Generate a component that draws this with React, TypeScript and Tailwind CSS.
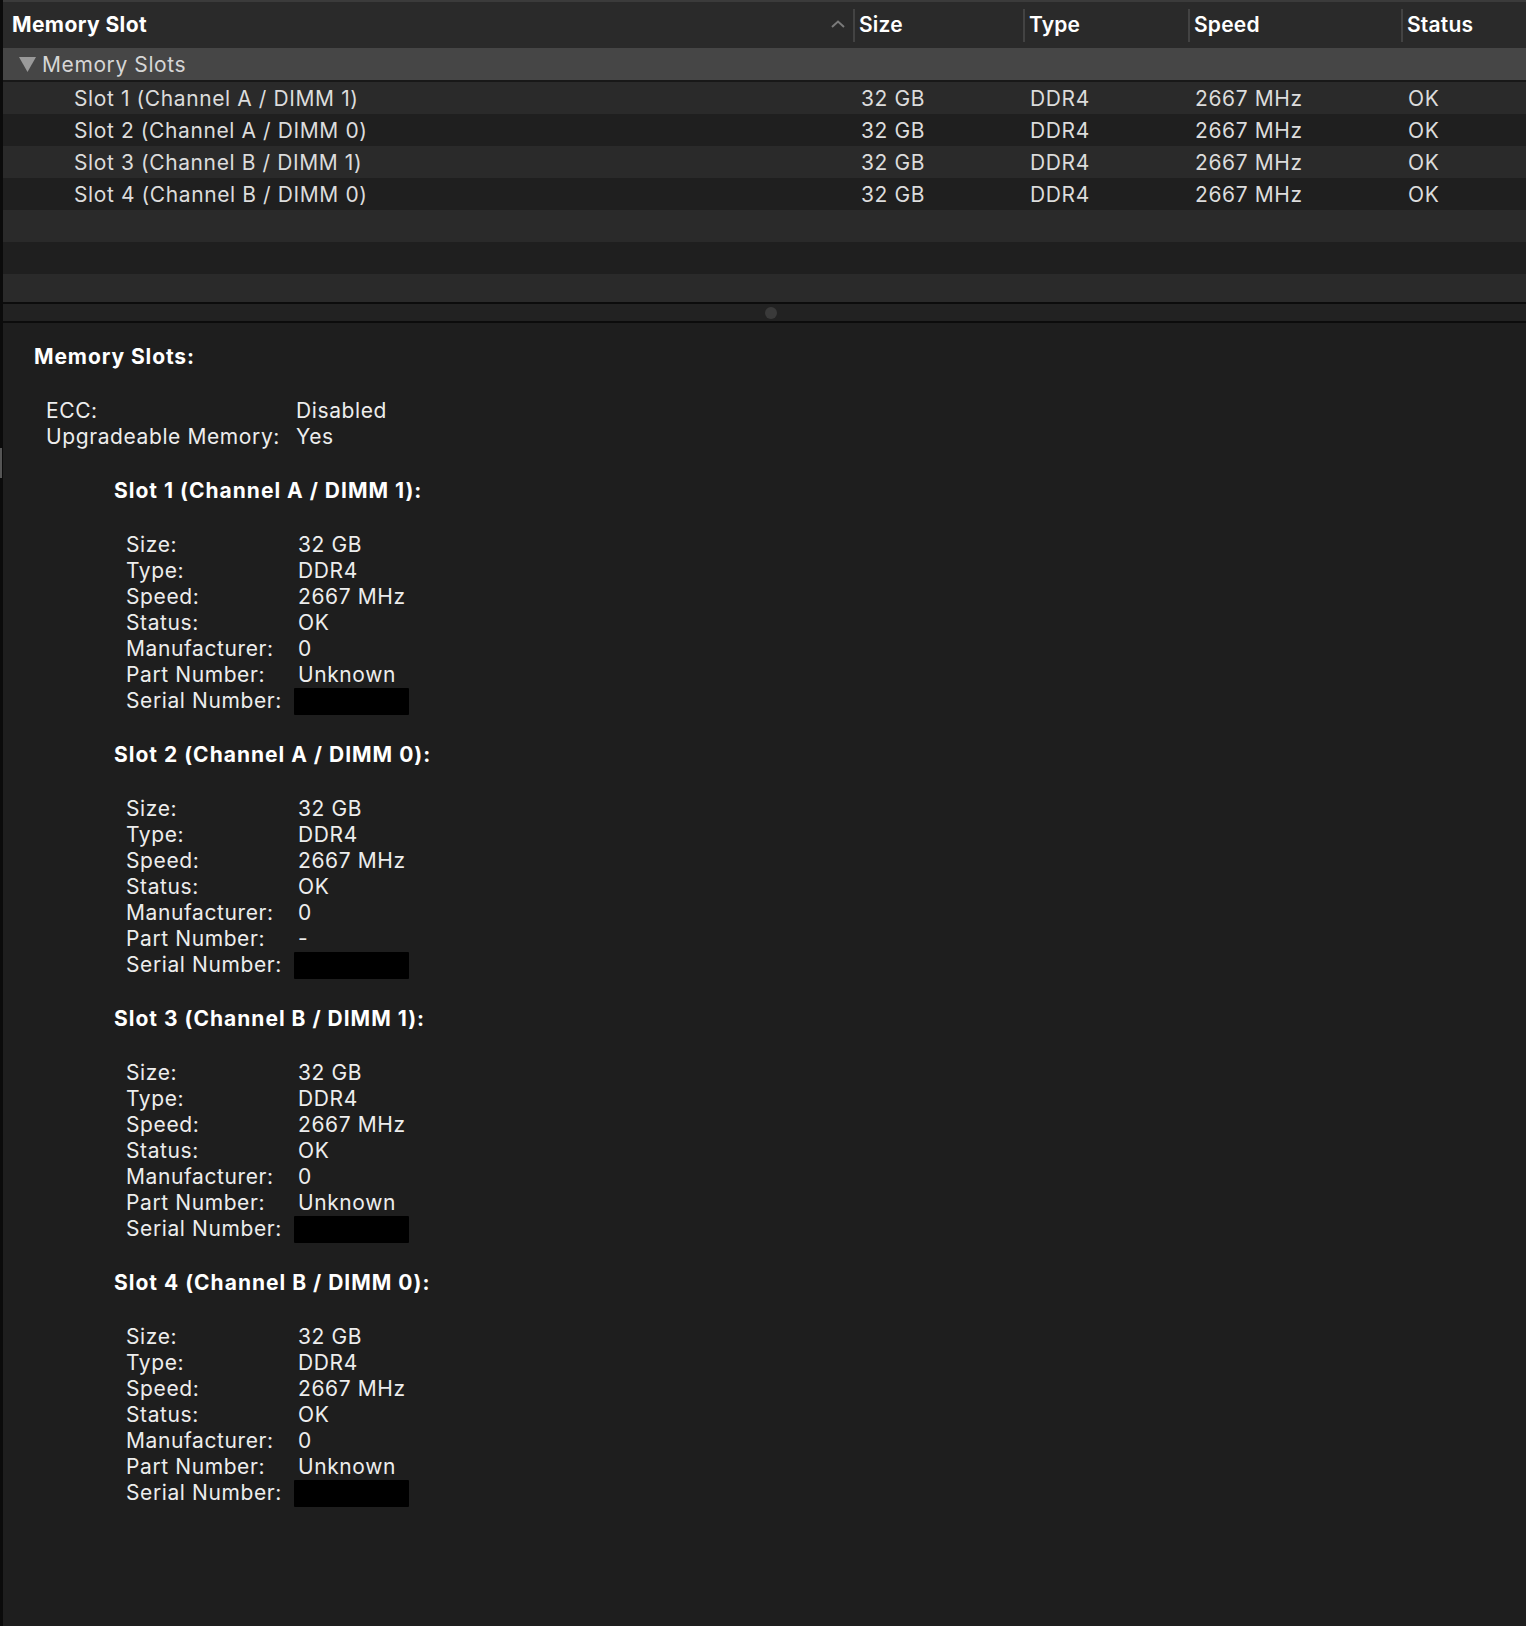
const font = { fontFamily: "Inter, 'Noto Sans', sans-serif" };

const slots = [
  { name: "Slot 1 (Channel A / DIMM 1)", part: "Unknown" },
  { name: "Slot 2 (Channel A / DIMM 0)", part: "-" },
  { name: "Slot 3 (Channel B / DIMM 1)", part: "Unknown" },
  { name: "Slot 4 (Channel B / DIMM 0)", part: "Unknown" },
];

const HeaderCell = ({ label, width }: { label: string; width: string }) => (
  <div className={`flex items-center h-full ${width}`}>
    <div className="w-[2px] h-[33px] bg-[#434343]" />
    <span className="ml-[4px] text-[21px] font-semibold tracking-[0.2px] text-white">{label}</span>
  </div>
);

const Row = ({ name, odd }: { name?: string; odd: boolean }) => (
  <div
    className={`flex items-center h-[32px] pt-[2px] text-[21px] tracking-[0.6px] text-[#dcdcdc] ${
      odd ? "bg-[#2a2a2a]" : "bg-[#1f1f1f]"
    }`}
  >
    {name && (
      <>
        <div className="w-[850px] pl-[71px]">{name}</div>
        <div className="w-[170px] pl-[8px]">32 GB</div>
        <div className="w-[165px] pl-[7px]">DDR4</div>
        <div className="w-[213px] pl-[7px]">2667 MHz</div>
        <div className="flex-1 pl-[7px]">OK</div>
      </>
    )}
  </div>
);

const Field = ({ label, value, masked }: { label: string; value?: string; masked?: boolean }) => (
  <div className="flex h-[26px] items-center">
    <div className="w-[168px] shrink-0">{label}</div>
    {masked ? (
      <div className="w-[115px] h-[27px] bg-black rounded-[1px]" />
    ) : (
      <div className="pl-[4px]">{value}</div>
    )}
  </div>
);

export default function App() {
  return (
    <div className="w-[1526px] h-[1626px] flex bg-[#1e1e1e] overflow-hidden" style={font}>
      {/* left window edge */}
      <div className="w-[3px] shrink-0 flex flex-col bg-[#0b0b0b]">
        <div className="h-[448px]" />
        <div className="h-[30px] w-[2px] bg-[#555]" />
      </div>

      <div className="flex-1 flex flex-col">
        {/* table header */}
        <div className="h-[48px] border-t-2 border-[#3b3b3b] bg-[#2a2a2a] flex items-center">
          <div className="w-[850px] flex items-center justify-between h-full pl-[9px] pr-[8px]">
            <span className="text-[21px] font-bold tracking-[0.4px] text-white">Memory Slot</span>
            <svg width="14" height="8" viewBox="0 0 14 8" className="mt-[-2px]">
              <path d="M1 7 L7 1.5 L13 7" fill="none" stroke="#7a7a7a" strokeWidth="2" />
            </svg>
          </div>
          <HeaderCell label="Size" width="w-[170px]" />
          <HeaderCell label="Type" width="w-[165px]" />
          <HeaderCell label="Speed" width="w-[213px]" />
          <HeaderCell label="Status" width="flex-1" />
        </div>

        {/* group row */}
        <div className="h-[32px] bg-[#464646] flex items-center text-[21px] tracking-[0.6px] text-[#d6d6d6]">
          <svg width="17" height="15" viewBox="0 0 17 15" className="ml-[16px]">
            <path d="M0 0 H17 L8.5 15 Z" fill="#9a9a9a" />
          </svg>
          <span className="ml-[6px] mt-[2px]">Memory Slots</span>
        </div>
        <div className="h-[2px] bg-[#181818]" />

        {slots.map((s, i) => (
          <Row key={s.name} name={s.name} odd={i % 2 === 0} />
        ))}
        <Row odd />
        <Row odd={false} />
        <div className="h-[28px] bg-[#2a2a2a]" />

        {/* splitter */}
        <div className="h-[2px] bg-[#0c0c0c]" />
        <div className="h-[17px] bg-[#222222] flex items-center justify-center">
          <div className="w-[12px] h-[12px] rounded-full bg-[#3a3a3a] ml-[12px]" />
        </div>
        <div className="h-[2px] bg-[#0c0c0c]" />

        {/* detail pane */}
        <div className="flex-1 bg-[#1e1e1e] text-[21px] tracking-[0.6px] text-[#ededed] leading-[26px] pt-[21px]">
          <div className="pl-[31px] font-bold tracking-[0.9px] text-white">Memory Slots:</div>
          <div className="pl-[43px] mt-[27px]">
            <div className="flex h-[27px] items-center">
              <div className="w-[250px]">ECC:</div>
              <div>Disabled</div>
            </div>
            <div className="flex h-[26px] items-center">
              <div className="w-[250px]">Upgradeable Memory:</div>
              <div>Yes</div>
            </div>
          </div>
          <div className="mt-[28px]">
            {slots.map((s) => (
              <div key={s.name} className="pl-[111px] mb-[28px]">
                <div className="h-[26px] flex items-center font-bold tracking-[1px] text-white">
                  {s.name}:
                </div>
                <div className="pl-[12px] mt-[28px]">
                  <Field label="Size:" value="32 GB" />
                  <Field label="Type:" value="DDR4" />
                  <Field label="Speed:" value="2667 MHz" />
                  <Field label="Status:" value="OK" />
                  <Field label="Manufacturer:" value="0" />
                  <Field label="Part Number:" value={s.part} />
                  <Field label="Serial Number:" masked />
                </div>
              </div>
            ))}
          </div>
        </div>
      </div>
    </div>
  );
}
